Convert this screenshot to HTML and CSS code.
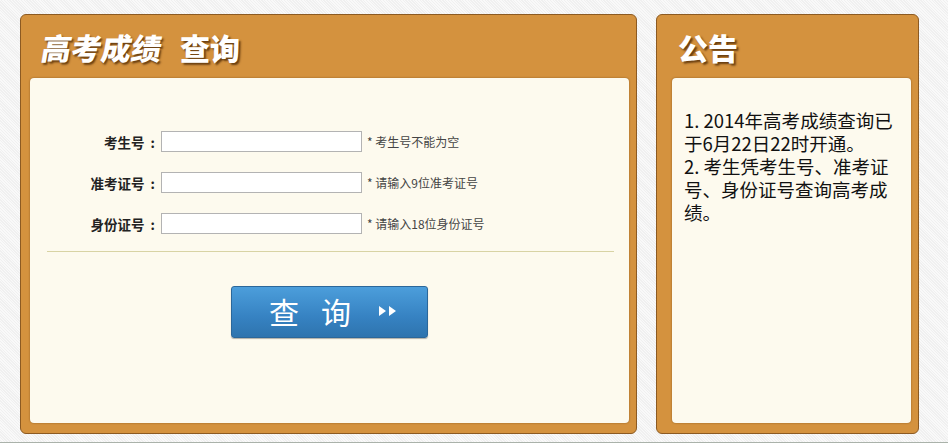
FILE: index.html
```html
<!DOCTYPE html>
<html>
<head>
  <title>高考成绩查询</title>
  <link rel="stylesheet" href="styles.css">
</head>
<body>
  <div class="page">
    <div class="panel query-panel">
      <div class="panel-head">
        <h1><em>高考成绩</em><span class="title-gap"></span>查询</h1>
      </div>
      <div class="panel-body">
        <form class="query-form">
          <div class="row">
            <label class="label">考生号<span class="colon">:</span></label>
            <input type="text" class="field">
            <span class="hint">* 考生号不能为空</span>
          </div>
          <div class="row">
            <label class="label">准考证号<span class="colon">:</span></label>
            <input type="text" class="field">
            <span class="hint">* 请输入9位准考证号</span>
          </div>
          <div class="row">
            <label class="label">身份证号<span class="colon">:</span></label>
            <input type="text" class="field">
            <span class="hint">* 请输入18位身份证号</span>
          </div>
          <div class="divider"></div>
          <div class="actions">
            <button type="button" class="btn-query">
              <span class="btn-text">查</span>
              <span class="btn-text">询</span>
              <svg width="20" height="12" viewBox="0 0 20 12">
                <polygon points="1,1 8,6 1,11" fill="#fff"/>
                <polygon points="11,1 18,6 11,11" fill="#fff"/>
              </svg>
            </button>
          </div>
        </form>
      </div>
    </div>
    <div class="panel notice-panel">
      <div class="panel-head">
        <h1>公告</h1>
      </div>
      <div class="panel-body">
        <p class="notice">1. 2014年高考成绩查询已于6月22日22时开通。<br>2. 考生凭考生号、准考证号、身份证号查询高考成绩。</p>
      </div>
    </div>
  </div>
  <div class="bottom-line"></div>
</body>
</html>
```

FILE: styles.css
```css
html, body {
  height: 100%;
}

body {
  margin: 0;
  font-family: "Noto Sans CJK SC", "Noto Sans", sans-serif;
  background-color: #f6f6f6;
  background-image: repeating-linear-gradient(45deg, #f9f9f9 0 1px, #f0f0f0 1px 2px);
  overflow: hidden;
}

.page {
  display: flex;
  gap: 19px;
  padding: 14px 0 0 20px;
}

.panel {
  display: flex;
  flex-direction: column;
  box-sizing: border-box;
  height: 420px;
  background-color: #d4923e;
  border: 1px solid #8c5a22;
  border-radius: 6px;
}

.query-panel {
  width: 617px;
}

.notice-panel {
  width: 263px;
}

.panel-head {
  height: 63px;
  box-sizing: border-box;
  padding: 13px 0 0 21px;
}

.panel-head h1 {
  display: flex;
  align-items: center;
  margin: 0;
  font-size: 30px;
  line-height: 38px;
  font-weight: 900;
  color: #ffffff;
  text-shadow: 2px 2px 2px rgba(70, 35, 0, 0.75);
}

.panel-head h1 em {
  display: inline-block;
  transform: skewX(-10deg);
  font-style: normal;
}

.title-gap {
  width: 18px;
}

.panel-body {
  flex: 1;
  margin: 0 7px 10px 9px;
  background-color: #fdfaee;
  border-radius: 4px;
  box-shadow: 0 0 2px rgba(90, 50, 10, 0.6);
}

.notice-panel .panel-body {
  margin-left: 15px;
}

/* form */
.query-form {
  padding-top: 33px;
}

.row {
  display: flex;
  align-items: center;
  height: 21px;
  margin-top: 20px;
}

.label {
  width: 125px;
  text-align: right;
  font-size: 13.5px;
  font-weight: bold;
  color: #222;
}

.colon {
  margin-left: 6px;
}

.field {
  box-sizing: border-box;
  width: 201px;
  height: 21px;
  margin: 0 0 0 6px;
  padding: 0 3px;
  border: 1px solid #b3b3b3;
  background: #fff;
}

.hint {
  margin-left: 5px;
  font-size: 12px;
  color: #444;
}

.divider {
  height: 1px;
  margin: 17px 15px 0 17px;
  background-color: #d8d3a4;
}

.actions {
  display: flex;
  justify-content: center;
  padding-top: 34px;
}

.btn-query {
  display: flex;
  align-items: center;
  justify-content: center;
  width: 197px;
  height: 52px;
  padding: 0 0 2px 8px;
  border: 1px solid #2b679a;
  border-radius: 3px;
  background: linear-gradient(#4c9edb, #3682c2 60%, #2e74ae);
  box-shadow: 0 1px 1px rgba(0, 0, 0, 0.3);
  color: #fff;
  font-family: "Noto Sans CJK SC", sans-serif;
  font-size: 30px;
  cursor: pointer;
}

.btn-text + .btn-text {
  margin-left: 22px;
}

.btn-query svg {
  margin-left: 27px;
}

/* notice */
.notice {
  margin: 0;
  padding: 31px 10px 0 12px;
  font-size: 18.5px;
  line-height: 23px;
  color: #111;
}

.bottom-line {
  margin-top: 8px;
  height: 2px;
  border-top: 1px solid #aab2aa;
  background: #fff;
}
```
